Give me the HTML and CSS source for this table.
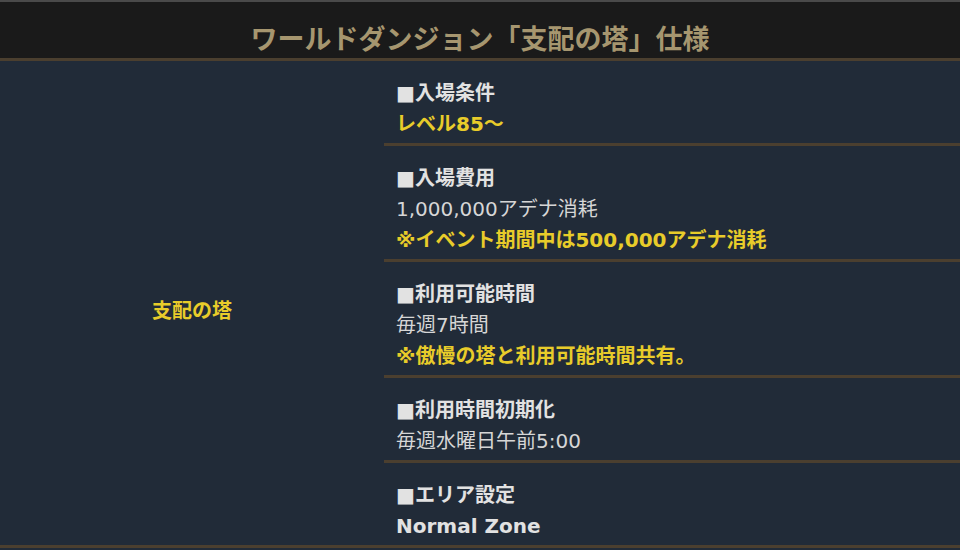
FILE: index.html
```html
<!DOCTYPE html>
<html lang="ja">
<head>
<meta charset="utf-8">
<title>支配の塔 仕様</title>
<link rel="stylesheet" href="styles.css">
</head>
<body>
<div class="page">
  <header class="head">ワールドダンジョン「支配の塔」仕様</header>
  <div class="table">
    <div class="name">支配の塔</div>
    <div class="specs">
      <section class="spec">
        <div class="label">■入場条件</div>
        <div class="hl">レベル85～</div>
      </section>
      <section class="spec">
        <div class="label">■入場費用</div>
        <div class="txt">1,000,000アデナ消耗</div>
        <div class="hl">※イベント期間中は500,000アデナ消耗</div>
      </section>
      <section class="spec">
        <div class="label">■利用可能時間</div>
        <div class="txt">毎週7時間</div>
        <div class="hl">※傲慢の塔と利用可能時間共有。</div>
      </section>
      <section class="spec">
        <div class="label">■利用時間初期化</div>
        <div class="txt">毎週水曜日午前5:00</div>
      </section>
      <section class="spec">
        <div class="label">■エリア設定</div>
        <div class="label">Normal Zone</div>
      </section>
    </div>
  </div>
</div>
</body>
</html>
```
FILE: styles.css
```css
html, body {
  margin: 0;
  padding: 0;
  background: #444;
}
.page {
  width: 960px;
  height: 550px;
  overflow: hidden;
  background: #212b38;
  font-family: "DejaVu Sans", "Noto Sans CJK JP", sans-serif;
  font-size: 20px;
  border-top: 2px solid #4a4a4a;
  box-sizing: border-box;
}
.head {
  background: #1a1a1a;
  color: #a6966f;
  font-family: "Noto Sans CJK JP", sans-serif;
  font-weight: 700;
  font-size: 27px;
  line-height: 30px;
  padding: 21px 0 5px;
  text-align: center;
  border-bottom: 3px solid #4b3f2f;
}
.table {
  display: flex;
  border-bottom: 3px solid #4b3f2f;
  background: #212b38;
}
.name {
  width: 384px;
  flex: none;
  display: flex;
  align-items: center;
  justify-content: center;
  padding-top: 12px;
  box-sizing: border-box;
  color: #e8cc2a;
  font-weight: 700;
  font-family: "Noto Sans CJK JP", sans-serif;
  font-size: 20px;
}
.specs {
  flex: 1;
  display: flex;
  flex-direction: column;
}
.spec {
  padding: 17px 12px 3px;
  line-height: 31px;
  border-bottom: 3px solid #4b3f2f;
}
.spec:last-child {
  border-bottom: none;
}
.label {
  color: #e2e2e2;
  font-weight: 700;
}
.txt {
  color: #d6d6d6;
}
.hl {
  color: #e8cc2a;
  font-weight: 700;
}
```
